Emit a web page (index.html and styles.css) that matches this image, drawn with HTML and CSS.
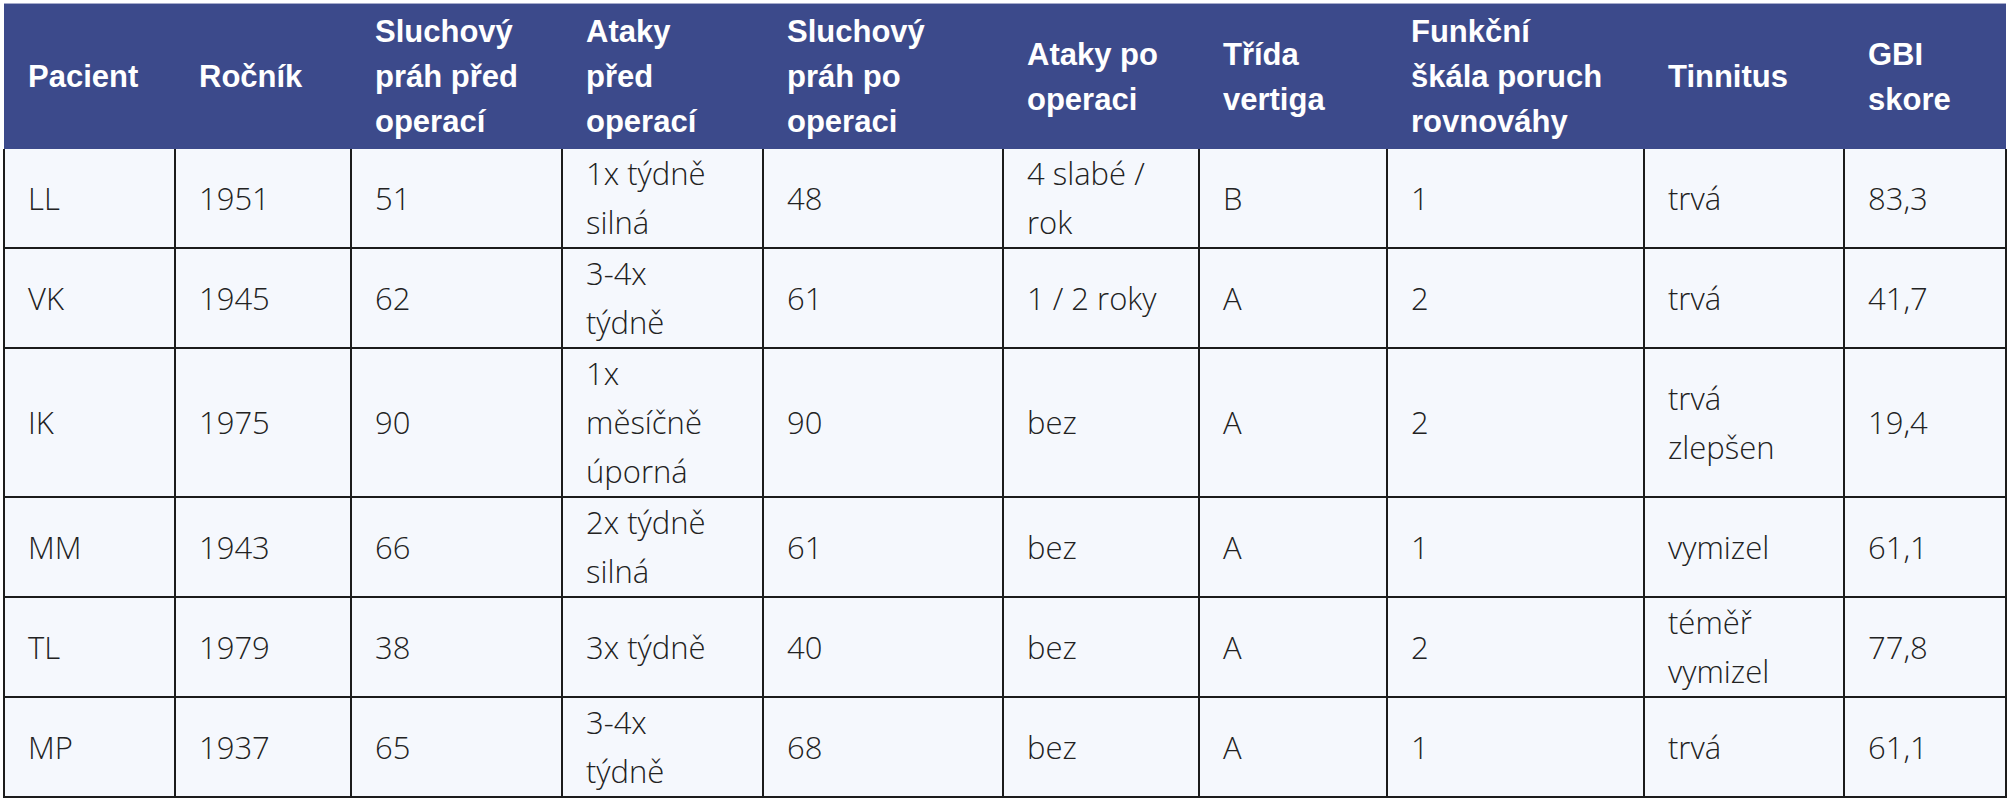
FILE: index.html
```html
<!DOCTYPE html>
<html lang="cs">
<head>
<meta charset="utf-8">
<title>Tabulka pacientů</title>
<link rel="stylesheet" href="styles.css">
</head>
<body>
<div class="page">
<table class="data">
  <colgroup>
    <col class="c1"><col class="c2"><col class="c3"><col class="c4"><col class="c5">
    <col class="c6"><col class="c7"><col class="c8"><col class="c9"><col class="c10">
  </colgroup>
  <thead>
    <tr>
      <th>Pacient</th>
      <th>Ročník</th>
      <th>Sluchový<br>práh před<br>operací</th>
      <th>Ataky<br>před<br>operací</th>
      <th>Sluchový<br>práh po<br>operaci</th>
      <th>Ataky po<br>operaci</th>
      <th>Třída<br>vertiga</th>
      <th>Funkční<br>škála poruch<br>rovnováhy</th>
      <th>Tinnitus</th>
      <th>GBI<br>skore</th>
    </tr>
  </thead>
  <tbody>
    <tr>
      <td>LL</td><td>1951</td><td>51</td><td>1x týdně<br>silná</td><td>48</td>
      <td>4 slabé /<br>rok</td><td>B</td><td>1</td><td>trvá</td><td>83,3</td>
    </tr>
    <tr>
      <td>VK</td><td>1945</td><td>62</td><td>3-4x<br>týdně</td><td>61</td>
      <td>1 / 2 roky</td><td>A</td><td>2</td><td>trvá</td><td>41,7</td>
    </tr>
    <tr>
      <td>IK</td><td>1975</td><td>90</td><td>1x<br>měsíčně<br>úporná</td><td>90</td>
      <td>bez</td><td>A</td><td>2</td><td>trvá<br>zlepšen</td><td>19,4</td>
    </tr>
    <tr>
      <td>MM</td><td>1943</td><td>66</td><td>2x týdně<br>silná</td><td>61</td>
      <td>bez</td><td>A</td><td>1</td><td>vymizel</td><td>61,1</td>
    </tr>
    <tr>
      <td>TL</td><td>1979</td><td>38</td><td>3x týdně</td><td>40</td>
      <td>bez</td><td>A</td><td>2</td><td>téměř<br>vymizel</td><td>77,8</td>
    </tr>
    <tr>
      <td>MP</td><td>1937</td><td>65</td><td>3-4x<br>týdně</td><td>68</td>
      <td>bez</td><td>A</td><td>1</td><td>trvá</td><td>61,1</td>
    </tr>
  </tbody>
</table>
</div>
</body>
</html>
```

FILE: styles.css
```css
html, body {
  margin: 0;
  padding: 0;
  background: #ffffff;
}

.page {
  padding: 3px 0 0 3px;
}

.data {
  border-collapse: collapse;
  table-layout: fixed;
  width: 2002px;
  font-family: "Liberation Sans", Arial, sans-serif;
}

.c1 { width: 171px; }
.c2 { width: 176px; }
.c3 { width: 211px; }
.c4 { width: 201px; }
.c5 { width: 240px; }
.c6 { width: 196px; }
.c7 { width: 188px; }
.c8 { width: 257px; }
.c9 { width: 200px; }
.c10 { width: 162px; }

.data th {
  background: #3c4a8b;
  color: #ffffff;
  font-weight: bold;
  font-size: 31px;
  line-height: 45px;
  text-align: left;
  vertical-align: middle;
  padding: 5px 8px 5px 24px;
  border: none;
  border-top: 1px solid #a6abcb;
}

.data td {
  background: #f5f8fd;
  color: #222222;
  font-family: "Open Sans", "Liberation Sans", Arial, sans-serif;
  font-weight: 300;
  font-size: 31px;
  line-height: 49px;
  text-align: left;
  vertical-align: middle;
  padding: 0 8px 0 23px;
  border: 2px solid #1c1c1c;
}

.data tbody tr:first-child td {
  border-top: none;
}
```
